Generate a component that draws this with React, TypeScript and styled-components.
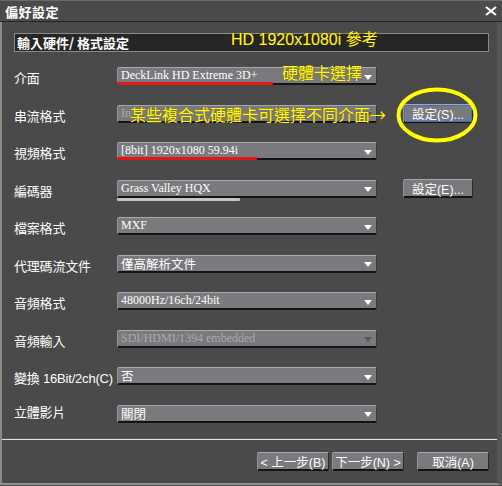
import React from "react";
import styled, { createGlobalStyle } from "styled-components";

const GlobalStyle = createGlobalStyle`
  html, body {
    margin: 0;
    padding: 0;
    background: #4a4a4a;
  }
`;

const cjk = `"Noto Sans CJK TC", "Noto Sans", sans-serif`;
const serif = `"Liberation Serif", "Noto Sans CJK TC", serif`;

const Window = styled.div`
  position: relative;
  width: 502px;
  height: 486px;
  background: #4a4a4a;
  display: flex;
  flex-direction: column;
  font-family: ${cjk};
  color: #fff;
  overflow: hidden;
`;

const TitleBar = styled.div`
  height: 20px;
  display: flex;
  align-items: center;
  justify-content: space-between;
  padding: 0 5px 0 5px;
  border-top: 1px solid #6a6a6a;
  border-bottom: 1px solid #262626;
  background: #4b4b4b;
`;

const Title = styled.span`
  font-size: 13px;
  font-weight: bold;
  letter-spacing: 0.5px;
`;

const Body = styled.div`
  flex: 1;
  display: flex;
  flex-direction: column;
  border-left: 2px solid #8a8a8a;
  border-right: 5px solid #555;
  border-bottom: 2px solid #8e8e8e;
  margin-bottom: 1px;
  padding: 11px 8px 0 12px;
`;

const SectionHeader = styled.div`
  height: 19px;
  box-sizing: border-box;
  background: #262626;
  border: 1px solid #8a8a8a;
  display: flex;
  align-items: center;
  padding-left: 2px;
  font-size: 13px;
  font-weight: bold;
`;

const Form = styled.div`
  margin-top: 5.5px;
  display: grid;
  grid-template-columns: 103px 260px 96px;
  grid-auto-rows: 37.5px;
  align-items: center;
`;

const Label = styled.div<{ $top?: boolean }>`
  font-family: "Liberation Sans", ${cjk};
  font-size: 13px;
  align-self: ${(p) => (p.$top ? "start" : "center")};
  margin-top: ${(p) => (p.$top ? "7px" : "3px")};
  white-space: nowrap;
  letter-spacing: -0.2px;
`;

const Select = styled.div<{ $disabled?: boolean; $cjk?: boolean }>`
  grid-column: 2;
  height: 18px;
  box-sizing: border-box;
  background: #7a797e;
  border-top: 1px solid #a8a8ab;
  border-left: 1px solid #959498;
  border-right: 1px solid #3a3a3a;
  border-bottom: 2px solid #141414;
  border-radius: 2px;
  display: flex;
  align-items: center;
  justify-content: space-between;
  padding: 0 4px 0 3px;
  font-family: ${(p) => (p.$cjk ? cjk : serif)};
  font-size: ${(p) => (p.$cjk ? "12.5px" : "12px")};
  color: ${(p) => (p.$disabled ? "#a9a9ad" : "#fff")};
  white-space: nowrap;
`;

const Arrow = styled.span<{ $disabled?: boolean }>`
  width: 0;
  height: 0;
  border-left: 4px solid transparent;
  border-right: 4px solid transparent;
  border-top: 5px solid ${(p) => (p.$disabled ? "#555" : "#fff")};
  margin-top: 3px;
`;

const Button = styled.button<{ $focus?: boolean }>`
  height: 19px;
  box-sizing: border-box;
  background: #7a797e;
  color: #fff;
  font-family: "Liberation Sans", ${cjk};
  font-size: 12.5px;
  padding: 0;
  border: none;
  border-top: 1px solid #a8a8ab;
  border-left: 1px solid #959498;
  border-right: 1px solid #2a2a2a;
  border-bottom: 2px solid #141414;
  border-radius: 2px;
  outline: ${(p) => (p.$focus ? "1px solid #3a6fd0" : "none")};
  outline-offset: -2px;
  display: flex;
  align-items: center;
  justify-content: center;
  white-space: nowrap;
`;

const SideButton = styled(Button)`
  grid-column: 3;
  justify-self: end;
  width: 70px;
`;

const Separator = styled.div`
  margin: 6.5px -8px 0 -12px;
  height: 1px;
  background: #e4e4e4;
  box-shadow: 0 -1px 0 #5a5a5a;
`;

const Footer = styled.div`
  display: flex;
  justify-content: flex-end;
  padding-top: 12px;
`;

const FooterButton = styled(Button)<{ $gap?: number }>`
  width: 72px;
  margin-left: ${(p) => p.$gap ?? 0}px;
`;

const Note = styled.div<{ $size?: number }>`
  position: absolute;
  color: #ffff00;
  font-size: ${(p) => p.$size ?? 16}px;
  line-height: 1;
  white-space: nowrap;
  text-shadow: 0 0 1px rgba(120, 60, 0, 0.9);
`;

const Underline = styled.div<{ $color?: string }>`
  position: absolute;
  height: 3px;
  border-radius: 1px;
  background: ${(p) => p.$color ?? "#e5141a"};
`;

const Ring = styled.svg`
  position: absolute;
  left: 396px;
  top: 87px;
`;

const CloseIcon = () => (
  <svg width="12" height="10" viewBox="0 0 12 10">
    <path d="M1 1 L11 9 M11 1 L1 9" stroke="#fff" strokeWidth="2.2" />
  </svg>
);

const rows = [
  { label: "介面", value: "DeckLink HD Extreme 3D+" },
  { label: "串流格式", value: "In", disabled: true, button: "設定(S)...", focus: true },
  { label: "視頻格式", value: "[8bit] 1920x1080 59.94i" },
  { label: "編碼器", value: "Grass Valley HQX", button: "設定(E)..." },
  { label: "檔案格式", value: "MXF" },
  { label: "代理碼流文件", value: "僅高解析文件", cjk: true },
  { label: "音頻格式", value: "48000Hz/16ch/24bit" },
  { label: "音頻輸入", value: "SDI/HDMI/1394 embedded", disabled: true },
  { label: "變換 16Bit/2ch(C)", value: "否", cjk: true },
  { label: "立體影片", value: "關閉", cjk: true, top: true },
];

export default function App() {
  return (
    <>
      <GlobalStyle />
      <Window>
        <TitleBar>
          <Title>偏好設定</Title>
          <CloseIcon />
        </TitleBar>
        <Body>
          <SectionHeader>輸入硬件/ 格式設定</SectionHeader>
          <Form>
            {rows.map((r) => (
              <React.Fragment key={r.label}>
                <Label $top={r.top}>{r.label}</Label>
                <Select $disabled={r.disabled} $cjk={r.cjk}>
                  <span>{r.value}</span>
                  <Arrow $disabled={r.disabled} />
                </Select>
                {r.button ? <SideButton $focus={r.focus}>{r.button}</SideButton> : <span />}
              </React.Fragment>
            ))}
          </Form>
          <Separator />
          <Footer>
            <FooterButton>&lt; 上一步(B)</FooterButton>
            <FooterButton $gap={3}>下一步(N) &gt;</FooterButton>
            <FooterButton $gap={13}>取消(A)</FooterButton>
          </Footer>
        </Body>

        <Note $size={16} style={{ left: 231, top: 32, fontFamily: `"Liberation Sans", ${cjk}` }}>
          HD 1920x1080i 參考
        </Note>
        <Note style={{ left: 282, top: 64 }}>硬體卡選擇</Note>
        <Note style={{ left: 130, top: 106 }}>某些複合式硬體卡可選擇不同介面→</Note>
        <Underline style={{ left: 117, top: 82, width: 156 }} />
        <Underline style={{ left: 117, top: 157, width: 140 }} />
        <Underline $color="#c4c4c4" style={{ left: 117, top: 198, width: 123 }} />
        <Ring width="82" height="56" viewBox="0 0 82 56">
          <ellipse cx="41" cy="28" rx="38.5" ry="25.5" fill="none" stroke="#ffff00" strokeWidth="4" />
        </Ring>
      </Window>
    </>
  );
}
